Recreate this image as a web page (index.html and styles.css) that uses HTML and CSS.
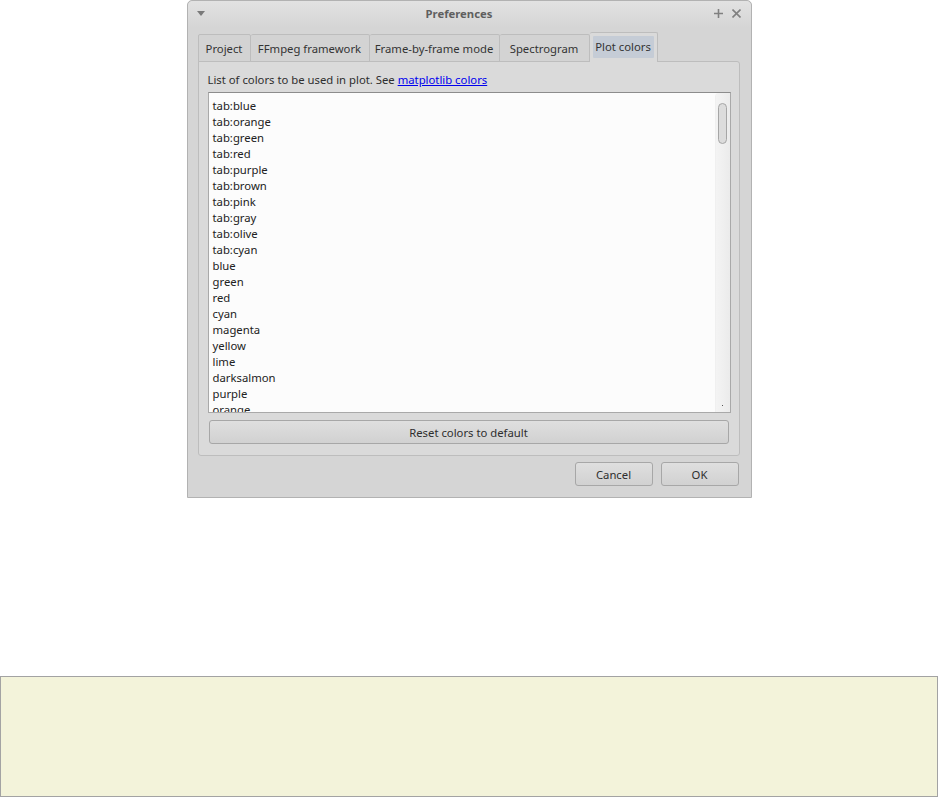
FILE: index.html
```html
<!DOCTYPE html>
<html lang="en">
<head>
    <meta charset="UTF-8">
    <title>Preferences</title>
    <link rel="stylesheet" href="styles.css">
</head>
<body>
    <div class="window">
        <div class="titlebar">
            <svg class="menu-arrow" width="8" height="5" viewBox="0 0 8 5"><path d="M0,0L8,0L4,5Z" fill="#7a7a7a"/></svg>
            <div class="title">Preferences</div>
            <div class="win-buttons">
                <svg width="9" height="9" viewBox="0 0 9 9"><path d="M4.5,0V9M0,4.5H9" stroke="#808080" stroke-width="1.6"/></svg>
                <svg width="9" height="9" viewBox="0 0 9 9"><path d="M0.5,0.5L8.5,8.5M8.5,0.5L0.5,8.5" stroke="#808080" stroke-width="1.6"/></svg>
            </div>
        </div>
        <div class="content">
            <div class="tabs">
                <div class="tab tab-project">Project</div>
                <div class="tab tab-ffmpeg">FFmpeg framework</div>
                <div class="tab tab-frame">Frame-by-frame mode</div>
                <div class="tab tab-spectro">Spectrogram</div>
                <div class="tab tab-plot active"><span>Plot colors</span></div>
            </div>
            <div class="pane">
                <div class="hint">List of colors to be used in plot. See <a href="#">matplotlib colors</a></div>
                <div class="listbox">
                    <div class="lines">
                        <div>tab:blue</div>
                        <div>tab:orange</div>
                        <div>tab:green</div>
                        <div>tab:red</div>
                        <div>tab:purple</div>
                        <div>tab:brown</div>
                        <div>tab:pink</div>
                        <div>tab:gray</div>
                        <div>tab:olive</div>
                        <div>tab:cyan</div>
                        <div>blue</div>
                        <div>green</div>
                        <div>red</div>
                        <div>cyan</div>
                        <div>magenta</div>
                        <div>yellow</div>
                        <div>lime</div>
                        <div>darksalmon</div>
                        <div>purple</div>
                        <div>orange</div>
                    </div>
                    <div class="scrollbar">
                        <div class="thumb"></div>
                        <div class="dot"></div>
                    </div>
                </div>
                <div class="btn reset">Reset colors to default</div>
            </div>
            <div class="actions">
                <div class="btn">Cancel</div>
                <div class="btn">OK</div>
            </div>
        </div>
    </div>
    <div class="note"></div>
</body>
</html>
```

FILE: styles.css
```css
body, html {
    margin: 0;
    padding: 0;
    background: #fff;
    font-family: 'Noto Sans', sans-serif;
    font-size: 11.3px;
    line-height: 16px;
    color: #2a2a2a;
}
.window {
    box-sizing: border-box;
    width: 565px;
    height: 498px;
    margin: 0 auto 178px;
    border: 1px solid #b2b2b2;
    border-radius: 5px 5px 0 0;
    background: #d5d5d5;
    display: flex;
    flex-direction: column;
}
.titlebar {
    height: 27px;
    flex: none;
    display: flex;
    align-items: center;
    padding: 0 10px 2px 9px;
    box-sizing: border-box;
    border-radius: 5px 5px 0 0;
    background: linear-gradient(#e2e2e2, #d5d5d5);
}
.menu-arrow {
    flex: none;
    margin-top: -1px;
}
.title {
    flex: 1;
    text-align: center;
    font-weight: bold;
    color: #5f5f5f;
}
.win-buttons {
    display: flex;
    gap: 9px;
    align-items: center;
}
.content {
    flex: 1;
    display: flex;
    flex-direction: column;
    padding: 6px 11px 10px 10px;
}
.tabs {
    display: flex;
    align-items: flex-end;
    height: 28px;
    position: relative;
    z-index: 1;
    margin-bottom: -1px;
}
.tab {
    box-sizing: border-box;
    height: 28px;
    padding: 2px 0 0;
    display: flex;
    align-items: center;
    justify-content: center;
    border: 1px solid #bdbdbd;
    border-left: none;
    border-radius: 2px 2px 0 0;
    background: #d3d3d3;
    color: #333;
}
.tab:first-child {
    border-left: 1px solid #bdbdbd;
}
.tab-project { width: 53px; }
.tab-ffmpeg { width: 119px; }
.tab-frame { width: 130px; }
.tab-spectro { width: 90px; }
.tab-plot { width: 68px; }
.tab.active {
    height: 30px;
    padding: 3px 3px 4px 3px;
    border-bottom: none;
    background: #dadada;
    align-items: stretch;
}
.tab.active span {
    flex: 1;
    display: flex;
    align-items: center;
    justify-content: center;
    background: #c5ccd6;
    border-radius: 1px;
}
.pane {
    box-sizing: border-box;
    height: 395px;
    border: 1px solid #bdbdbd;
    border-radius: 0 3px 3px 3px;
    background: #dadada;
    padding: 10px 8px 11px 9px;
    display: flex;
    flex-direction: column;
}
.hint {
    color: #2e2e2e;
}
.hint a {
    color: #0000ee;
}
.listbox {
    box-sizing: border-box;
    height: 321px;
    flex: none;
    margin-top: 4px;
    border: 1px solid #a9a9a9;
    border-top-color: #8c8c8c;
    background: #fcfcfc;
    display: flex;
    overflow: hidden;
}
.lines {
    flex: 1;
    padding: 5px 4px 0;
    color: #222;
    overflow: hidden;
}
.scrollbar {
    width: 14px;
    flex: none;
    background: linear-gradient(90deg, #f4f4f4, #ebebeb);
    border-left: 1px solid #f0f0f0;
    border-top-left-radius: 4px;
    position: relative;
}
.thumb {
    box-sizing: border-box;
    position: absolute;
    left: 2px;
    top: 10px;
    width: 9px;
    height: 41px;
    border: 1px solid #a6a6a6;
    border-radius: 5px;
    background: #dcdcdc;
}
.dot {
    position: absolute;
    left: 6px;
    bottom: 6px;
    width: 1px;
    height: 1px;
    background: #555;
}
.btn {
    box-sizing: border-box;
    height: 24px;
    padding-top: 2px;
    display: flex;
    align-items: center;
    justify-content: center;
    border: 1px solid #a7a7a7;
    border-radius: 3px;
    background: linear-gradient(#dfdfdf, #d1d1d1);
    color: #2e2e2e;
}
.reset {
    flex: none;
    margin: 7px 2px 0 1px;
}
.actions {
    display: flex;
    justify-content: flex-end;
    gap: 8px;
    margin-top: 6px;
    padding-right: 1px;
}
.actions .btn {
    width: 78px;
}
.note {
    box-sizing: border-box;
    height: 121px;
    border: 1px solid #a3a3a3;
    background: #f3f3da;
}
```
